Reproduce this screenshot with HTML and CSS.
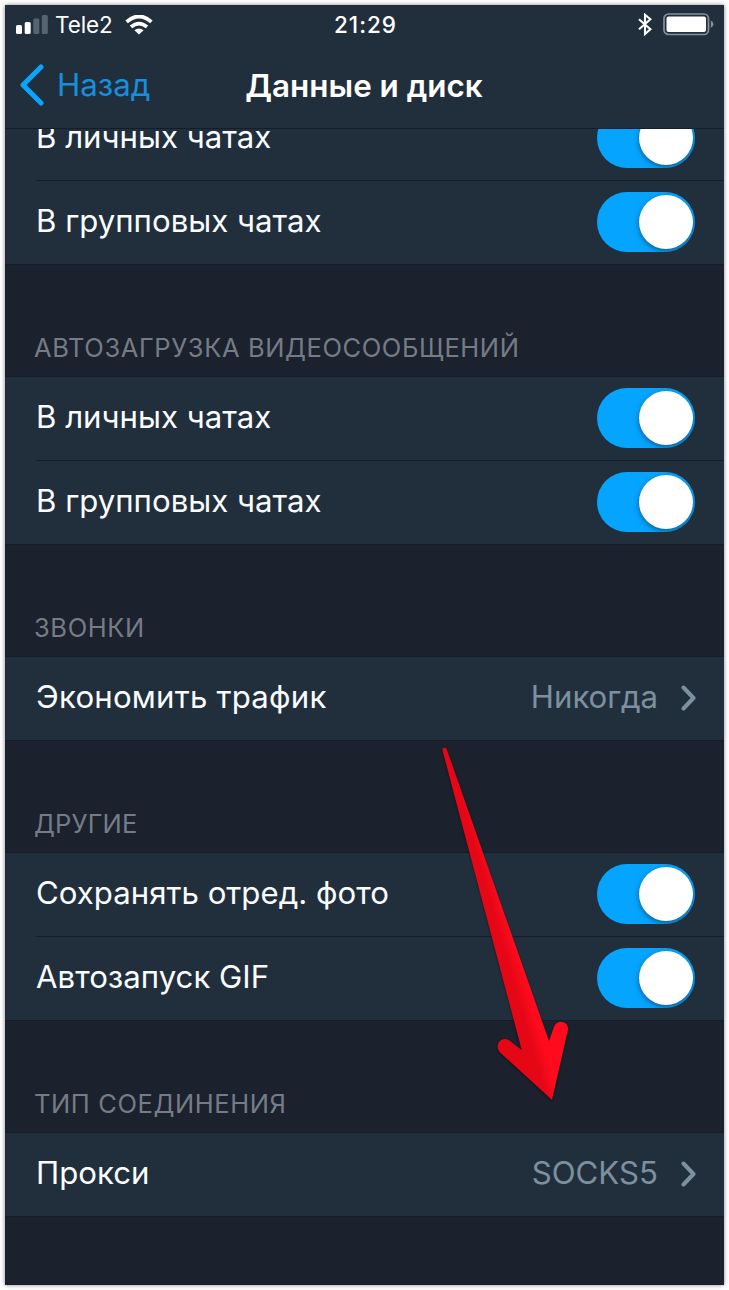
FILE: index.html
```
<!DOCTYPE html>
<html lang="ru">
<head>
<meta charset="utf-8">
<title>Данные и диск</title>
<link rel="stylesheet" href="styles.css">
</head>
<body>
<main class="screen">
  <header class="top">
    <div class="status">
      <div class="status-left">
        <svg class="signal" width="32" height="19" viewBox="0 0 32 19"><rect x="0" y="10" width="6" height="9" rx="1.5" fill="#fff"/><rect x="8.7" y="7" width="6" height="12" rx="1.5" fill="#fff"/><rect x="17.3" y="3.5" width="6" height="15.5" rx="1.5" fill="#566371"/><rect x="25.8" y="0" width="6" height="19" rx="1.5" fill="#566371"/></svg>
        <span class="carrier">Tele2</span>
        <svg class="wifi" width="28" height="20" viewBox="0 0 28 20"><g fill="none" stroke="#fff" stroke-width="3.8"><path d="M1.6 6.9Q14-4.1 26.4 6.9"/><path d="M6 11.9Q14 5.3 22 11.9"/></g><path d="M9.4 15.3Q14 11.7 18.6 15.3L14 19.6Z" fill="#fff"/></svg>
      </div>
      <span class="clock">21:29</span>
      <div class="status-right">
        <svg width="14" height="23" viewBox="0 0 14 23"><path d="M1 6.3 12.4 16.2 7 21V1.8L12.4 6.3 1 16.2" fill="none" stroke="#fff" stroke-width="2.1"/></svg>
        <svg class="battery" width="51" height="23" viewBox="0 0 51 23"><rect x="1" y="1" width="44.5" height="20.5" rx="4.5" fill="none" stroke="#84909b" stroke-width="1.7"/><rect x="3.5" y="3.5" width="39.5" height="15.5" rx="2" fill="#fff"/><path d="M47.8 7.5Q50.4 8.8 50.4 11.3T47.8 15Z" fill="#84909b"/></svg>
      </div>
    </div>
    <nav class="nav">
      <div class="back"><svg width="26" height="42" viewBox="0 0 26 42"><path d="M23 3 5 21 23 39" fill="none" stroke="#08a5fc" stroke-width="5" stroke-linecap="round" stroke-linejoin="round"/></svg><span class="back-label">Назад</span></div>
      <h1 class="title">Данные и диск</h1>
    </nav>
  </header>
  <div class="content">
    <section class="group group-first">
      <div class="row"><span class="label">В личных чатах</span><i class="toggle"></i></div>
      <div class="row"><span class="label">В групповых чатах</span><i class="toggle"></i></div>
    </section>
    <h2 class="heading">АВТОЗАГРУЗКА ВИДЕОСООБЩЕНИЙ</h2>
    <section class="group">
      <div class="row"><span class="label">В личных чатах</span><i class="toggle"></i></div>
      <div class="row"><span class="label">В групповых чатах</span><i class="toggle"></i></div>
    </section>
    <h2 class="heading">ЗВОНКИ</h2>
    <section class="group">
      <div class="row"><span class="label label-wide">Экономить трафик</span><span class="value">Никогда</span><svg class="chevron" width="16" height="28" viewBox="0 0 16 28"><path d="M2.5 3.5 12.5 14 2.5 24.5" fill="none" stroke="#7c909e" stroke-width="4" stroke-linecap="round" stroke-linejoin="round"/></svg></div>
    </section>
    <h2 class="heading heading-tight">ДРУГИЕ</h2>
    <section class="group">
      <div class="row"><span class="label">Сохранять отред. фото</span><i class="toggle"></i></div>
      <div class="row"><span class="label">Автозапуск GIF</span><i class="toggle"></i></div>
    </section>
    <h2 class="heading">ТИП СОЕДИНЕНИЯ</h2>
    <section class="group">
      <div class="row"><span class="label">Прокси</span><span class="value">SOCKS5</span><svg class="chevron" width="16" height="28" viewBox="0 0 16 28"><path d="M2.5 3.5 12.5 14 2.5 24.5" fill="none" stroke="#7c909e" stroke-width="4" stroke-linecap="round" stroke-linejoin="round"/></svg></div>
    </section>
  </div>
  <svg class="arrow" width="200" height="390" viewBox="0 0 600 1170">
    <defs><linearGradient id="red" gradientUnits="userSpaceOnUse" x1="220" y1="650" x2="300" y2="627"><stop offset="0" stop-color="#e50716"/><stop offset=".35" stop-color="#e50716"/><stop offset=".75" stop-color="#ff0b1d"/></linearGradient></defs>
    <path d="M67 59C67 52 78 52 80 57L387 933 402 890C414 862 451 877 443 903L396 1110 241 968C219 944 247 914 270 933L305 960Z" fill="url(#red)"/>
  </svg>
</main>
</body>
</html>
```
FILE: styles.css
```
body { margin: 0; background: #fff; font-family: Inter, "Noto Sans", sans-serif; }
.screen { position: relative; box-sizing: border-box; width: 719px; height: 1280px; margin: 5px; background: #1b212d; overflow: hidden; box-shadow: 0 0 4px rgba(0,0,0,.5); display: flex; flex-direction: column; }
.top { height: 123px; flex: none; background: #212f3d; border-bottom: 1px solid #131e2c; }
.status { display: grid; grid-template-columns: 1fr auto 1fr; align-items: center; height: 39px; padding: 0 10px 0 11px; color: #fff; }
.status-left { display: flex; align-items: center; }
.carrier { font-size: 22.5px; letter-spacing: -.1px; margin: 0 12px 0 7px; }
.clock { font-size: 22.5px; font-weight: 500; letter-spacing: 1px; padding-left: 1px; }
.status-right { display: flex; align-items: center; justify-content: flex-end; gap: 11px; }
.nav { height: 84px; display: grid; grid-template-columns: 1fr auto 1fr; align-items: center; }
.back { display: flex; align-items: center; padding: 0 0 2px 13px; gap: 13px; color: #168fdc; font-size: 31.3px; white-space: nowrap; }
.title { margin: 0 1px 0 0; color: #fff; font-size: 31.4px; font-weight: 600; line-height: 40px; white-space: nowrap; }
.content { flex: 1; min-height: 0; overflow: hidden; }
.group { background: #212f3d; border-top: 1px solid #151d29; border-bottom: 1px solid #151d29; }
.group-first { margin-top: -32px; border-top: 0; }
.row { box-sizing: border-box; display: flex; align-items: center; height: 83px; padding: 0 29px 2px 0; margin-left: 31px; color: #fafcff; font-size: 31.2px; line-height: 38px; white-space: nowrap; }
.row + .row { height: 84px; border-top: 1px solid #151d29; }
.label, .value { padding-bottom: 2px; }
.label-wide { letter-spacing: .2px; }
.toggle { position: relative; width: 98px; height: 60px; border-radius: 30px; background: #05a4ff; margin-left: auto; overflow: hidden; }
.toggle::after { content: ""; position: absolute; top: 3px; right: 2.5px; width: 54px; height: 54px; border-radius: 50%; background: #fff; box-shadow: 0 2px 5px rgba(15,45,75,.6); }
.value { margin-left: auto; color: #7c909e; }
.chevron { margin-left: 23px; margin-right: -2px; }
.heading { box-sizing: border-box; margin: 0; height: 111px; padding: 68px 0 0 29px; font-size: 25.5px; line-height: 30px; letter-spacing: .6px; font-weight: 400; color: #757c87; white-space: nowrap; }
.heading-tight { letter-spacing: .15px; }
.arrow { position: absolute; left: 415px; top: 725px; filter: drop-shadow(0 1px 1px rgba(0,0,0,.5)); }
```
